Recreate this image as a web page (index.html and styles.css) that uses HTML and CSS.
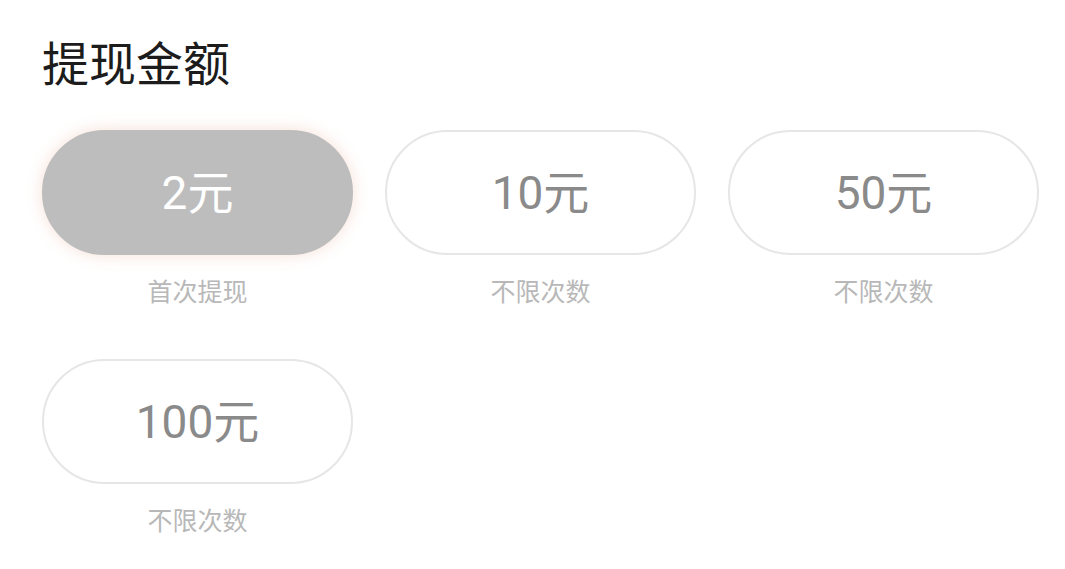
FILE: index.html
```html
<!DOCTYPE html>
<html lang="zh-CN">
<head>
<meta charset="utf-8">
<link rel="stylesheet" href="styles.css">
</head>
<body>
<main class="page">
  <h1 class="title">提现金额</h1>
  <div class="grid">
    <div class="item">
      <div class="pill pill-active">2元</div>
      <div class="note">首次提现</div>
    </div>
    <div class="item">
      <div class="pill">10元</div>
      <div class="note">不限次数</div>
    </div>
    <div class="item">
      <div class="pill">50元</div>
      <div class="note">不限次数</div>
    </div>
    <div class="item">
      <div class="pill">100元</div>
      <div class="note">不限次数</div>
    </div>
  </div>
</main>
</body>
</html>
```

FILE: styles.css
```css
html, body {
  margin: 0;
  padding: 0;
  background: #ffffff;
}
body {
  font-family: Roboto, "Noto Sans CJK SC", sans-serif;
}
.page {
  padding: 35px 26px 0 42px;
}
.title {
  margin: 0;
  font-family: "Noto Sans CJK SC", sans-serif;
  font-weight: 400;
  font-size: 47px;
  line-height: 52px;
  color: #1c1c1c;
}
.grid {
  margin-top: 43px;
  display: grid;
  grid-template-columns: repeat(3, 311px);
  column-gap: 32px;
  row-gap: 54px;
}
.item {
  display: flex;
  flex-direction: column;
  align-items: center;
}
.pill {
  box-sizing: border-box;
  width: 311px;
  height: 125px;
  padding-bottom: 8px;
  border-radius: 62.5px;
  border: 2px solid #e6e6e6;
  display: flex;
  align-items: center;
  justify-content: center;
  font-size: 46px;
  color: #8a8a8a;
}
.pill-active {
  background: #bdbdbd;
  border-color: #bdbdbd;
  color: #ffffff;
  box-shadow: 0 0 14px 2px rgba(240, 200, 185, 0.45);
}
.note {
  margin-top: 20px;
  font-family: "Noto Sans CJK SC", sans-serif;
  font-size: 25px;
  line-height: 30px;
  color: #b8b8b8;
}
```
